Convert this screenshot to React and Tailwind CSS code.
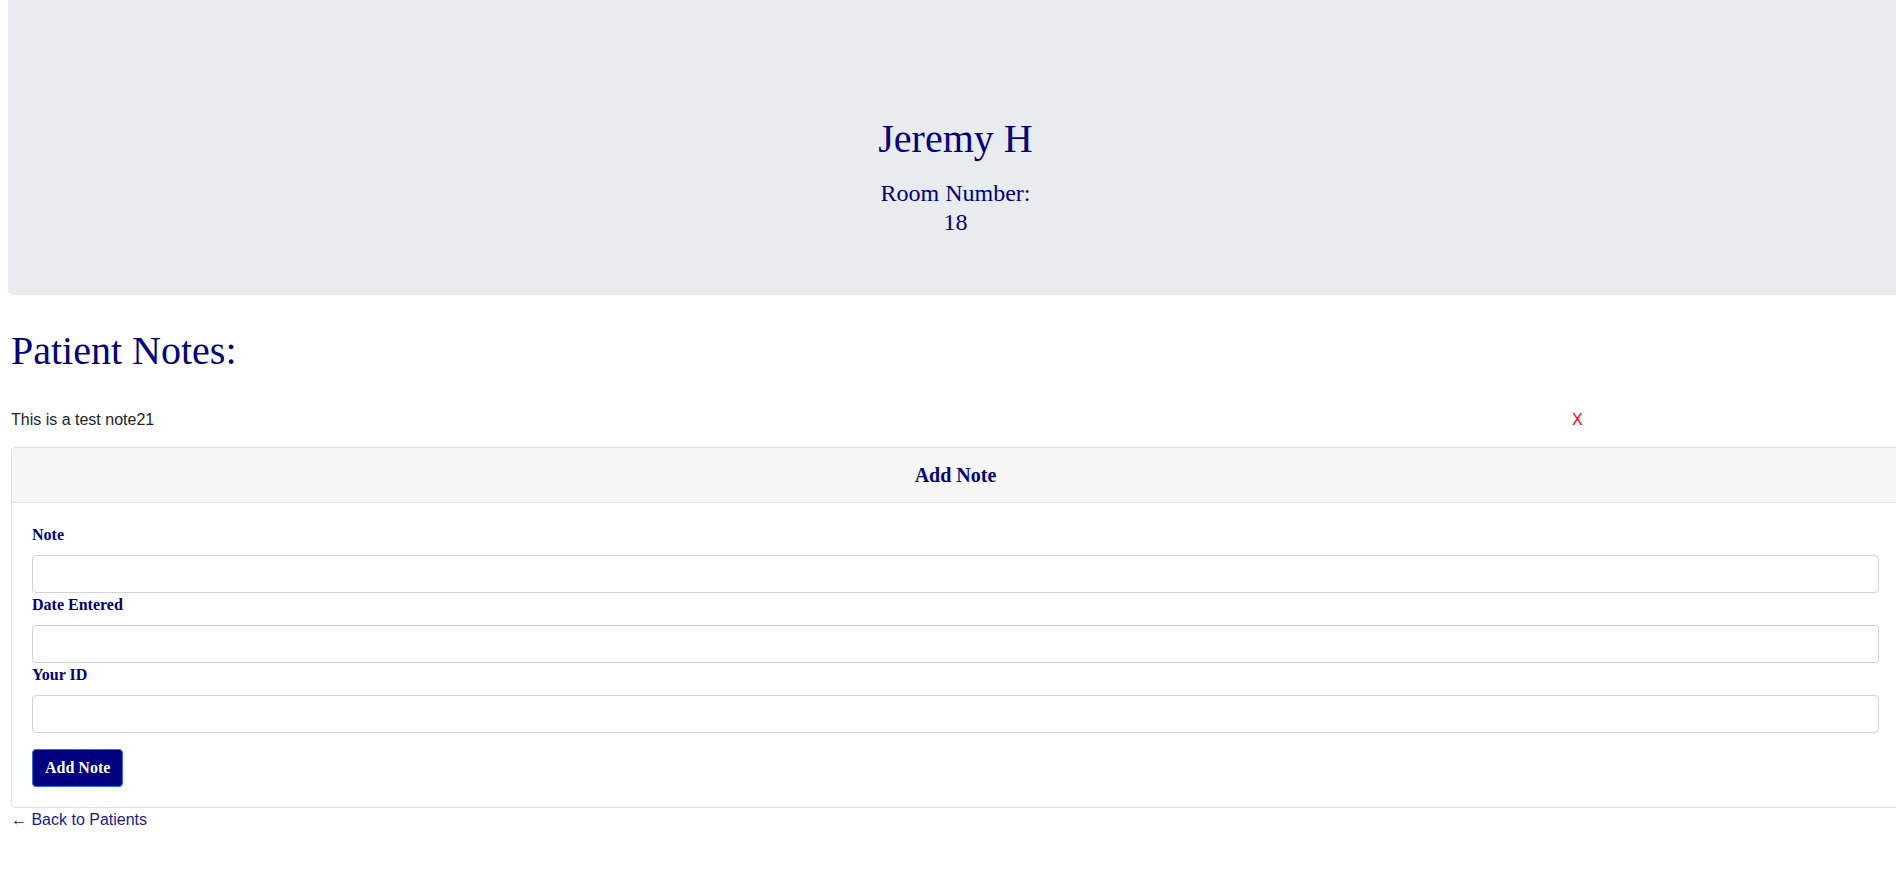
import { useState } from 'react';

const serif = 'font-["Liberation_Serif","Times_New_Roman",serif]';
const sans = 'font-["Liberation_Sans",Arial,sans-serif]';

const FormField = ({ label, value, onChange }) => (
  <div>
    <label className={`block text-[16px] leading-[24px] font-bold text-[#000080] mb-[8px] ${serif}`}>
      {label}
    </label>
    <input
      type="text"
      value={value}
      onChange={(e) => onChange(e.target.value)}
      className="block w-full h-[38px] px-[12px] bg-white border border-[#ced4da] rounded-[4px] outline-none"
    />
  </div>
);

const App = () => {
  const [notes, setNotes] = useState([{ id: 1, text: 'This is a test note21' }]);
  const [note, setNote] = useState('');
  const [dateEntered, setDateEntered] = useState('');
  const [yourId, setYourId] = useState('');

  const removeNote = (id) => setNotes(notes.filter((n) => n.id !== id));

  const addNote = (e) => {
    e.preventDefault();
    if (!note) return;
    setNotes([...notes, { id: Date.now(), text: note }]);
    setNote('');
    setDateEntered('');
    setYourId('');
  };

  return (
    <div className="w-full min-h-screen bg-white overflow-hidden">
      {/* patient header */}
      <div className={`ml-[8px] w-[1895px] h-[295px] bg-[#e9ecef] rounded-b-[5px] pt-[115px] text-center text-[#000080] ${serif}`}>
        <h1 className="text-[40px] leading-[48px]">Jeremy H</h1>
        <p className="mt-[16px] text-[24px] leading-[28.8px]">
          Room Number:
          <br />
          18
        </p>
      </div>

      <div className="ml-[11px] w-[1889px]">
        <h2 className={`mt-[32px] text-[40px] leading-[48px] text-[#000080] ${serif}`}>Patient Notes:</h2>

        <div className="mt-[33px]">
          {notes.map((n) => (
            <div key={n.id} className={`flex text-[16px] leading-[24px] ${sans}`}>
              <div className="w-[1561px] text-[#212529]">{n.text}</div>
              <button onClick={() => removeNote(n.id)} className="text-[#ff0000] cursor-pointer">
                X
              </button>
            </div>
          ))}
        </div>

        <div className="mt-[15px] border border-[#dfdfdf] rounded-[4px]">
          <div className="h-[55px] flex items-center justify-center bg-[#f7f7f7] border-b border-[#dfdfdf] rounded-t-[4px]">
            <h5 className={`text-[20px] leading-[24px] font-bold text-[#000080] ${serif}`}>Add Note</h5>
          </div>
          <form onSubmit={addNote} className="px-[20px] pt-[20px] pb-[20px]">
            <FormField label="Note" value={note} onChange={setNote} />
            <FormField label="Date Entered" value={dateEntered} onChange={setDateEntered} />
            <FormField label="Your ID" value={yourId} onChange={setYourId} />
            <button
              type="submit"
              className={`mt-[16px] h-[38px] px-[12px] bg-[#000080] border border-[#2f6fe0] rounded-[4px] text-white text-[16px] font-bold ${serif}`}
            >
              Add Note
            </button>
          </form>
        </div>

        <a href="#" className={`block text-[16px] leading-[24px] text-[#1a1a8c] ${sans}`}>
          ← Back to Patients
        </a>
      </div>
    </div>
  );
};

export default App;
